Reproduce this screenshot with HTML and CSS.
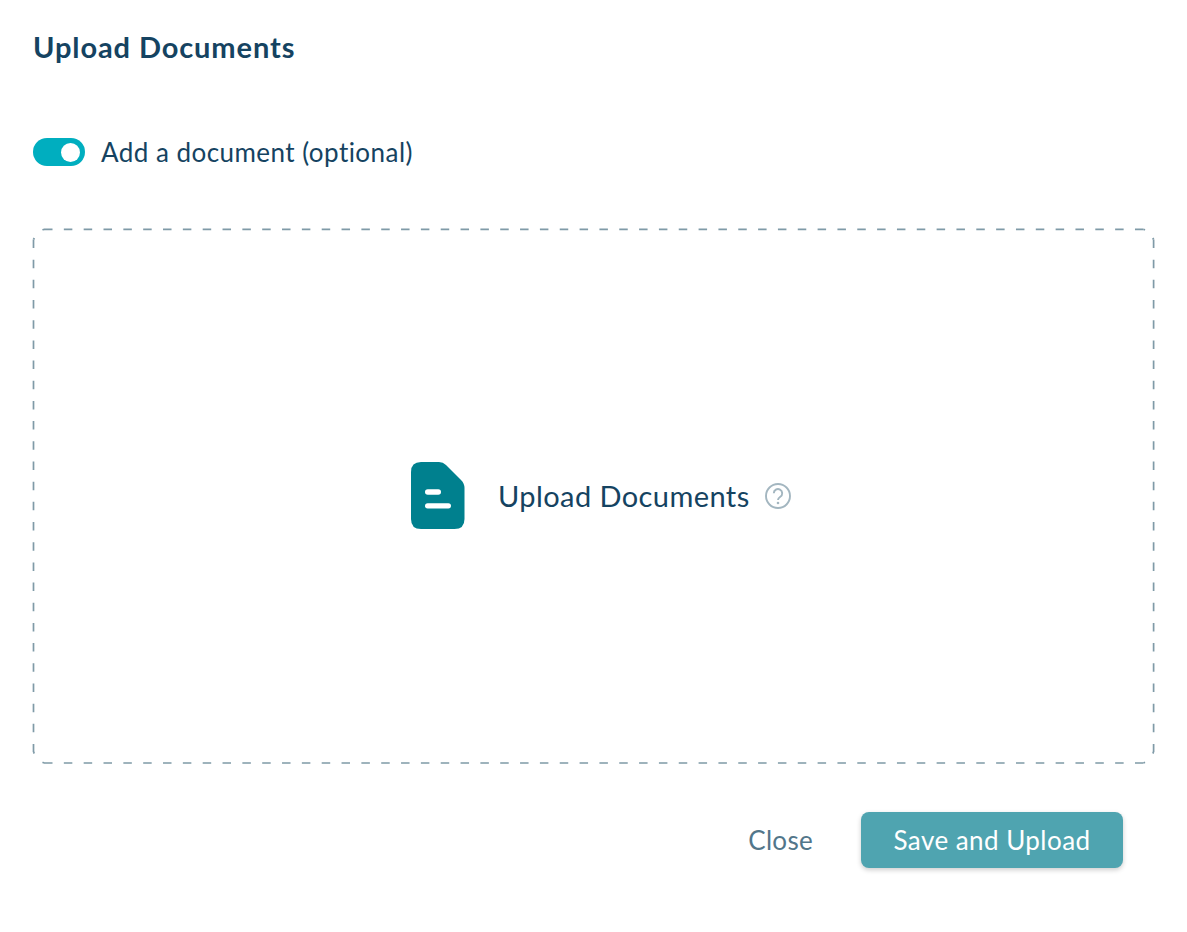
FILE: index.html
```html
<!DOCTYPE html>
<html lang="en">
<head>
<meta charset="utf-8">
<title>Upload Documents</title>
<link rel="stylesheet" href="styles.css">
</head>
<body>
<main class="page">
  <h1 class="title">Upload Documents</h1>
  <div class="toggle-row">
    <span class="toggle"><span class="knob"></span></span>
    <span class="toggle-label">Add a document (optional)</span>
  </div>
  <section class="dropzone">
    <svg class="dash" width="1122" height="536" aria-hidden="true">
      <g fill="none" stroke="#7f9aa7" stroke-width="1.700">
        <path d="M11 .3H1110.500M11 534H1110.500" stroke-dasharray="8.500 11.336"/>
        <path d="M.5 10.500V523M1120.600 10.500V523" stroke-dasharray="8.500 11.680"/>
        <path d="M11 .3L9.500 1.100M1110.500 .3L1112 1.100M11 534L9.500 533.200M1110.500 534L1112 533.200M.5 10.500L1.300 9M1120.600 10.500L1119.800 9M.5 523L1.300 524.500M1120.600 523L1119.800 524.500"/>
      </g>
    </svg>
    <svg class="doc-icon" width="54" height="67" viewBox="0 0 54 67" aria-hidden="true">
      <path d="M10 0H28Q32 0 35 3L50 18Q53.500 21.500 53.500 26V57Q53.500 67 43.500 67H10Q0 67 0 57V10Q0 0 10 0Z" fill="#00808e"/>
      <rect x="14" y="27.300" width="16" height="5.500" rx="2.750" fill="#fff"/>
      <rect x="14" y="41.200" width="26" height="5.300" rx="2.650" fill="#fff"/>
    </svg>
    <span class="drop-label">Upload Documents</span>
    <svg class="help" width="26" height="26" viewBox="0 0 26 26" aria-hidden="true">
      <circle cx="13" cy="13" r="12" fill="none" stroke="#a3b6c0" stroke-width="1.900"/>
      <path d="M8.800 10.300a4.200 4.200 0 1 1 6.500 3.500c-1.500 1-2.300 1.600-2.300 3.200" fill="none" stroke="#a3b6c0" stroke-width="1.900"/>
      <circle cx="13" cy="20" r="1.300" fill="#a3b6c0"/>
    </svg>
  </section>
  <footer class="actions">
    <button class="btn-close" type="button">Close</button>
    <button class="btn-save" type="button">Save and Upload</button>
  </footer>
</main>
</body>
</html>
```
FILE: styles.css
```css
* { box-sizing: border-box; }
html, body { margin: 0; padding: 0; background: #fff; }
body { font-family: "Lato", "Noto Sans", sans-serif; color: #154361; }
.page { width: 1187px; height: 932px; padding: 28px 33px 0; display: flex; flex-direction: column; }
.title { margin: 0; font-size: 29px; line-height: 38px; font-weight: 700; letter-spacing: 0.9px; color: #154361; }
.toggle-row { margin-top: 72px; height: 28px; display: flex; align-items: center; gap: 16px; }
.toggle { width: 52px; height: 28px; border-radius: 14px; background: #00aebf; display: flex; align-items: center; justify-content: flex-end; padding-right: 5px; }
.knob { width: 19px; height: 19px; border-radius: 50%; background: #fff; }
.toggle-label { font-size: 26px; line-height: 30px; letter-spacing: 0.46px; }
.dropzone { position: relative; margin-top: 63px; width: 1122px; height: 536px; display: flex; align-items: center; padding-left: 378px; padding-bottom: 3px; }
.dash { position: absolute; left: 0; top: 0; overflow: visible; }
.doc-icon { flex: none; }
.drop-label { margin-left: 33px; font-size: 29px; line-height: 34px; letter-spacing: 0.42px; }
.help { margin-left: 15px; flex: none; }
.actions { margin-top: 47px; padding-right: 31px; display: flex; justify-content: flex-end; align-items: center; gap: 48px; }
.btn-close { background: none; border: 0; padding: 0; font: inherit; font-size: 26px; letter-spacing: 0.3px; color: #52768a; }
.btn-save { width: 262px; height: 56px; border: 0; border-radius: 8px; background: #4fa4b0; color: #fff; font: inherit; font-size: 26px; letter-spacing: 0.45px; box-shadow: 0 2px 5px rgba(0, 0, 0, .2); }
```
